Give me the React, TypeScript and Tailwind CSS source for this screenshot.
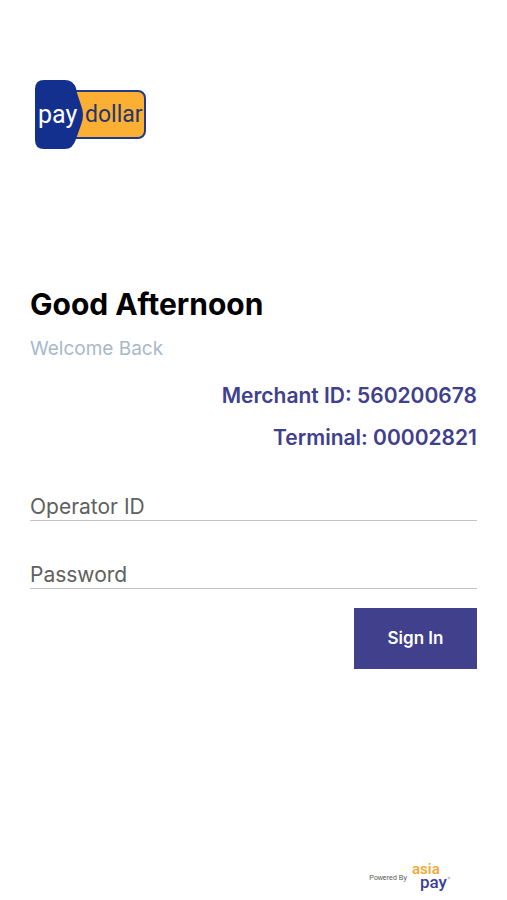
import * as React from "react";
import { useState } from "react";

const merchant = {
  merchantId: "560200678",
  terminal: "00002821",
};

function PayDollarLogo() {
  return (
    <svg
      className="ml-1 block h-[72px] w-[114px]"
      viewBox="0 0 114 72"
      role="img"
      aria-label="PayDollar"
    >
      <rect x="30" y="12" width="81" height="47" rx="7" fill="#fbb034" stroke="#1f3a8c" strokeWidth="2" />
      <path
        d="M10 1H31Q39 1 42 9L43 14L47 26Q51 36 47 46L42 60Q39 70 31 70H10Q1 70 1 61V10Q1 1 10 1Z"
        fill="#14308f"
      />
      <g fontFamily="Roboto, sans-serif">
        <text x="4" y="44" fontSize="25" fill="#ffffff">pay</text>
        <text x="51" y="43" fontSize="23" fill="#27346f">dollar</text>
      </g>
    </svg>
  );
}

function AsiaPayLogo() {
  return (
    <svg className="block h-9 w-10" viewBox="0 0 40 36" role="img" aria-label="AsiaPay">
      <g fontFamily="Roboto, sans-serif" fontWeight="500">
        <text x="1" y="14" fontSize="15" fill="#f5a62b">asia</text>
        <text x="9" y="28" fontSize="17" fill="#3b3f9b">pay</text>
      </g>
      <circle cx="38" cy="18" r="1" fill="none" stroke="#9a9ab8" strokeWidth="0.6" />
    </svg>
  );
}

interface FieldProps {
  id: string;
  label: string;
  type: string;
  value: string;
  onChange: (value: string) => void;
}

// The label sits over the empty input and fades once something is typed
function Field({ id, label, type, value, onChange }: FieldProps) {
  return (
    <div className="relative">
      <input
        id={id}
        type={type}
        placeholder=" "
        value={value}
        onChange={(e) => onChange(e.target.value)}
        className="peer block h-8 w-full border-b border-[#c4c4c4] bg-transparent text-[21px] text-[#222222] outline-none"
      />
      <label
        htmlFor={id}
        className="absolute inset-x-0 top-0 cursor-text text-[21px] leading-[35px] text-[#606060] opacity-0 peer-placeholder-shown:opacity-100"
      >
        {label}
      </label>
    </div>
  );
}

export default function App() {
  const [operatorId, setOperatorId] = useState("");
  const [password, setPassword] = useState("");

  const handleSubmit = (e: React.FormEvent) => {
    e.preventDefault();
  };

  return (
    <main className="flex min-h-screen flex-col bg-white px-[30px] pt-[79px] font-['Inter',sans-serif]">
      <PayDollarLogo />

      <h1 className="mt-[133px] text-[30px] leading-10 font-bold text-black">Good Afternoon</h1>
      <p className="mt-[13px] text-[19px] leading-6 text-[#a9b8c9]">Welcome Back</p>

      <div className="mt-5 space-y-3 text-right text-[21px] leading-[30px] font-semibold text-[#40408c]">
        <p>Merchant ID: {merchant.merchantId}</p>
        <p>Terminal: {merchant.terminal}</p>
      </div>

      <form onSubmit={handleSubmit} className="mt-9">
        <div className="space-y-9">
          <Field id="operatorId" label="Operator ID" type="text" value={operatorId} onChange={setOperatorId} />
          <Field id="password" label="Password" type="password" value={password} onChange={setPassword} />
        </div>
        <div className="mt-[19px] flex justify-end">
          <button type="submit" className="h-[61px] w-[123px] bg-[#40408c] text-[17px] font-semibold text-white">
            Sign In
          </button>
        </div>
      </form>

      <footer className="mt-auto flex items-center justify-end gap-1 pr-[26px] pb-1">
        <span className="font-['Liberation_Sans',sans-serif] text-[7px] text-[#555555]">Powered By</span>
        <AsiaPayLogo />
      </footer>
    </main>
  );
}
